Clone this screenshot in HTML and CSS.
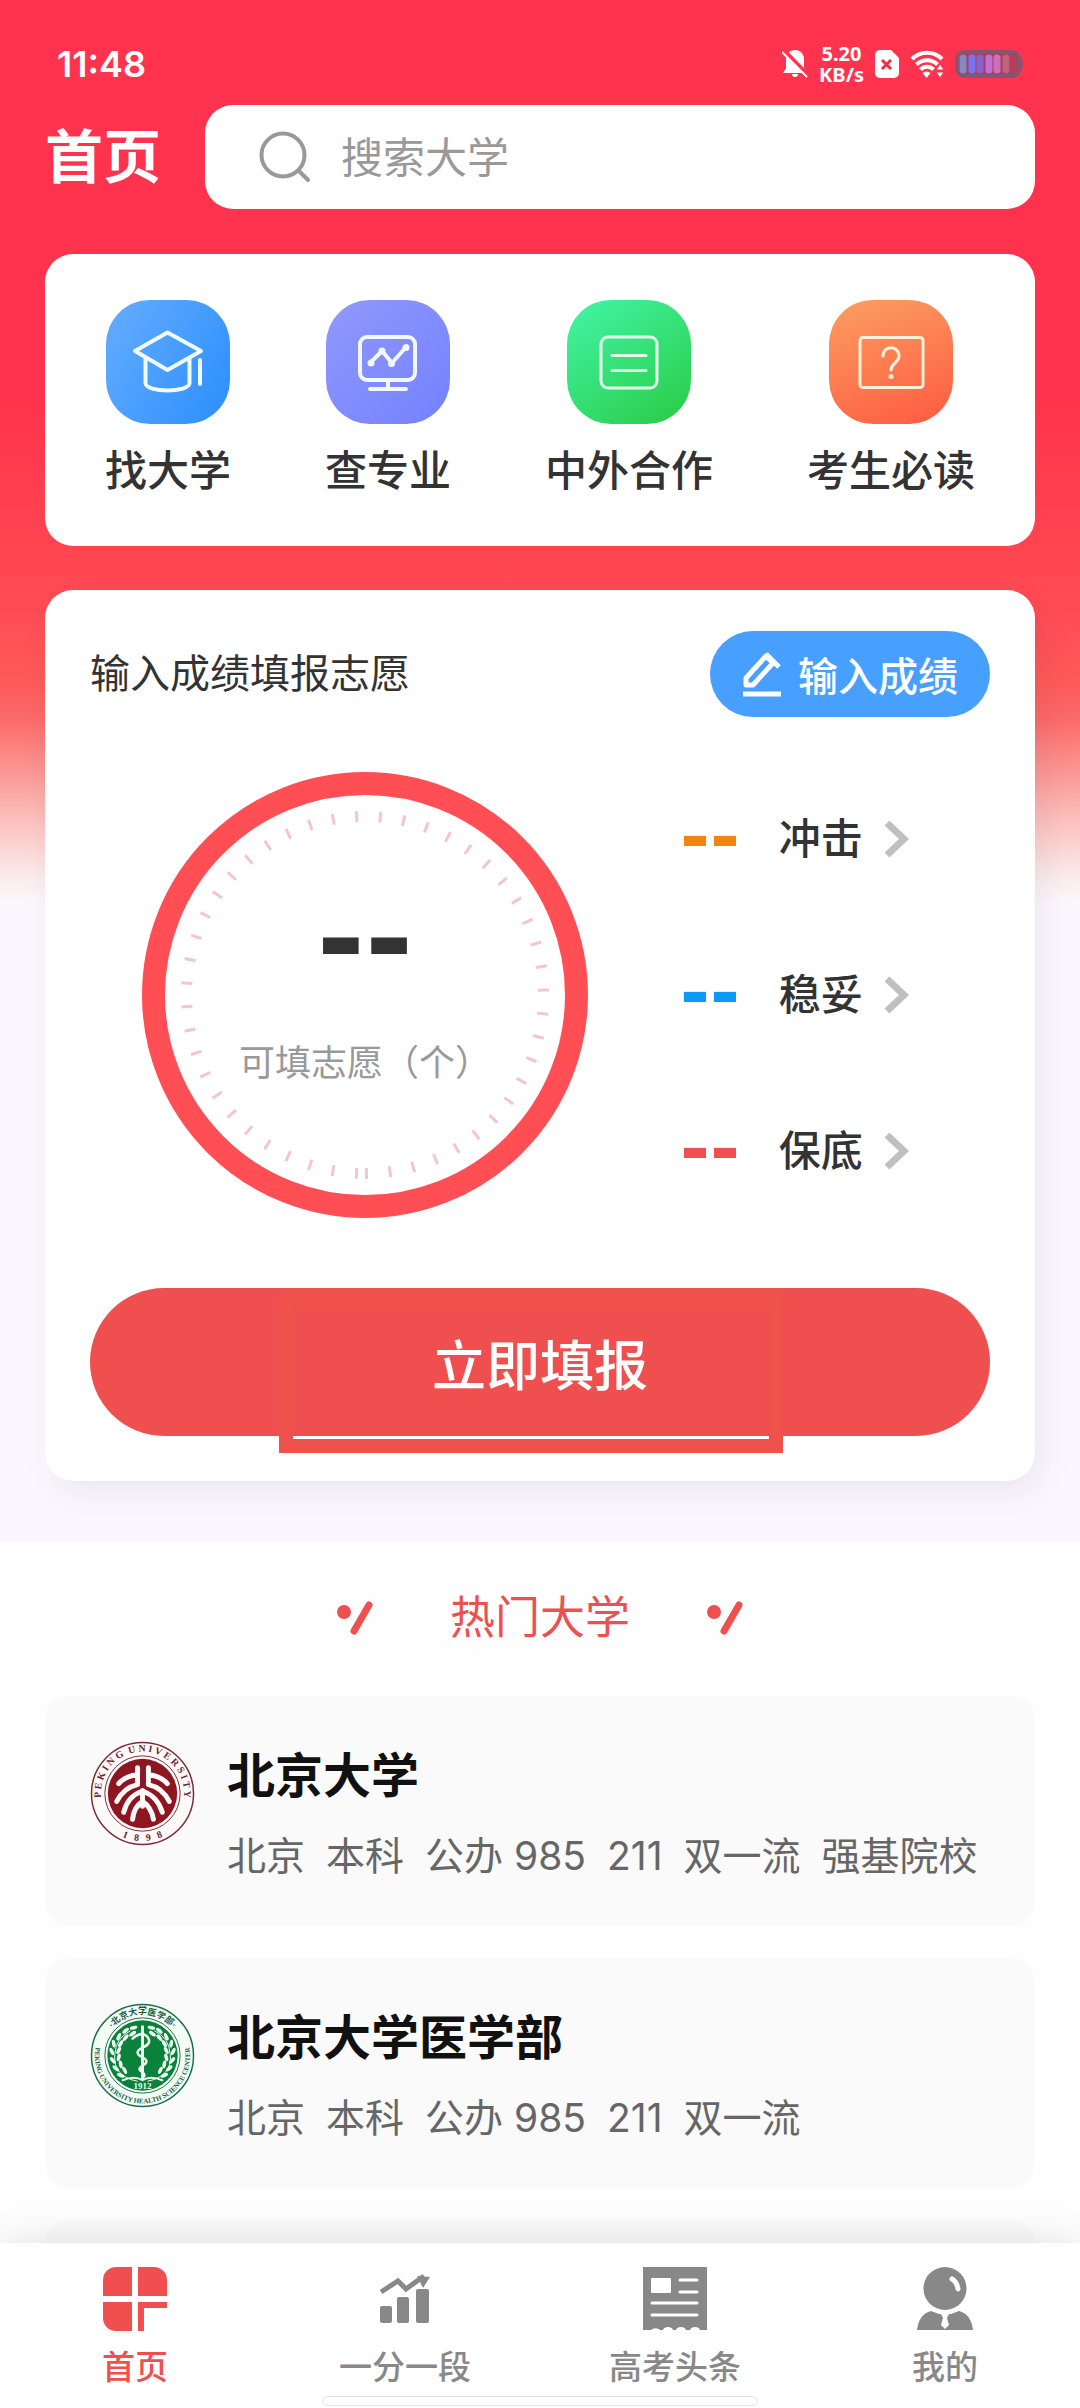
FILE: index.html
```html
<!DOCTYPE html>
<html lang="zh-CN">
<head>
<meta charset="utf-8">
<meta name="viewport" content="width=device-width, initial-scale=1">
<title>首页</title>
<link rel="stylesheet" href="styles.css">
</head>
<body>
<div class="app">
  <main class="scroller">
    <div class="hero">
      <div class="status">
        <time class="clock">11:48</time>
        <div class="status-icons">
          <svg width="26" height="30" viewBox="0 0 26 30"><path fill="#fff" d="M13 1c5.500 0 9 4 9 9v9l3 5H1l3-5v-9c0-5 3.500-9 9-9zM10 25h6a3 3 0 0 1-6 0z"/><path stroke="#ff334d" stroke-width="5" d="M1 1l26 27"/><path stroke="#fff" stroke-width="2" d="M0 3l25 25"/></svg>
          <div class="speed"><span>5.20</span><span>KB/s</span></div>
          <svg width="24" height="28" viewBox="0 0 24 28"><path fill="#fff" d="M5 0h11l8 8v15a5 5 0 0 1-5 5H5a5 5 0 0 1-5-5V5a5 5 0 0 1 5-5z"/><path stroke="#e8304a" stroke-width="3" d="M7 10l9 9M16 10l-9 9"/></svg>
          <svg width="34" height="28" viewBox="0 0 34 28" fill="none"><g stroke="#fff" stroke-width="4"><path d="M2 9a21 21 0 0 1 30 0"/><path d="M6.500 14.500a15 15 0 0 1 21 0"/><path d="M10.500 19.500a9 9 0 0 1 13 0"/></g><path fill="#fff" d="M12.500 23q4-3 8 0l-4 5z"/><path fill="#fff" stroke="#ff334d" stroke-width="1" d="M30 14l4 6h-8zM30 28l4-6h-8z"/></svg>
          <svg width="68" height="28" viewBox="0 0 68 28"><rect x="2" y="2" width="62" height="24" rx="7" fill="#a2425f" stroke="#855574" stroke-width="4"/><path stroke="#855574" stroke-width="3" stroke-linecap="round" d="M66 10v8"/><g stroke-width="7" stroke-linecap="round"><path stroke="#8787c5" d="M8 8v12"/><path stroke="#7a72ee" d="M17 8v12"/><path stroke="#8b62c8" d="M25 8v12"/><path stroke="#c070d0" d="M34 8v12"/><path stroke="#d070bd" d="M42 8v12"/><path stroke="#c0627e" d="M51 8v12"/><path stroke="#b44057" d="M58 8v12"/></g></svg>
        </div>
      </div>

      <header class="topbar">
        <h1 class="page-title">首页</h1>
        <label class="search">
          <svg width="52" height="52" viewBox="0 0 52 52" fill="none" stroke="#999" stroke-width="4" stroke-linecap="round"><circle cx="24" cy="24" r="21.500"/><path d="M40 40l9 9"/></svg>
          <input class="search-input" type="search" placeholder="搜索大学" aria-label="搜索大学">
        </label>
      </header>

      <nav class="card quick" aria-label="快捷入口">
        <a class="quick-item" href="#universities">
          <svg class="tile tile-blue" viewBox="0 0 124 124" fill="none" stroke="#f0fbff" stroke-width="4" stroke-linejoin="round" stroke-linecap="round"><path d="M61.500 32.500L95 51 61.500 70 29 51zM39.500 58v25c0 10 44 10 44 0V58M94 60v24"/></svg>
          <span>找大学</span>
        </a>
        <a class="quick-item" href="#majors">
          <svg class="tile tile-violet" viewBox="0 0 124 124" fill="none" stroke="#f2f8ff" stroke-width="4" stroke-linejoin="round" stroke-linecap="round"><rect x="34" y="37" width="55" height="43" rx="7"/><path d="M44 63l12-12 10 12 14-16M62 80v9M44 89h36"/><g fill="#f2f8ff" stroke="none"><circle cx="45" cy="63" r="3.500"/><circle cx="56" cy="51" r="3.500"/><circle cx="65.500" cy="63.500" r="3.500"/><circle cx="80" cy="47.500" r="3.500"/></g></svg>
          <span>查专业</span>
        </a>
        <a class="quick-item" href="#joint">
          <svg class="tile tile-green" viewBox="0 0 124 124" fill="none" stroke="#e2ffe9" stroke-width="3" stroke-linecap="round"><rect x="34" y="37" width="56" height="51" rx="7"/><path d="M45 55.500h34M45 70.500h34"/></svg>
          <span>中外合作</span>
        </a>
        <a class="quick-item" href="#guide">
          <svg class="tile tile-orange" viewBox="0 0 124 124" fill="none" stroke="#fff0d8" stroke-width="3" stroke-linecap="round"><rect x="31" y="37.500" width="63" height="50" rx="3"/><path d="M54 56c0-11 16-11 16 0 0 7-8 7-8 14"/><circle cx="62" cy="76.500" r="2.500" fill="#fff0d8" stroke="none"/></svg>
          <span>考生必读</span>
        </a>
      </nav>

      <section class="card plan">
        <div class="plan-head">
          <h2 class="plan-title">输入成绩填报志愿</h2>
          <button class="score-button" type="button">
            <svg width="40" height="46" viewBox="0 0 40 46" fill="none" stroke="#fff" stroke-width="5" stroke-linejoin="round"><path d="M4 34V27L24 5l7 7-20 22zM24 3l13 13" /><path d="M1 43h38"/></svg>
            <span>输入成绩</span>
          </button>
        </div>
        <div class="gauge-row">
          <div class="gauge">
            <svg class="gauge-ring" viewBox="0 0 446 446" fill="none"><circle cx="223" cy="223" r="211.500" stroke="#ff4f55" stroke-width="23"/><path stroke="#f1c6ce" stroke-width="11" stroke-dasharray="3 20.640" d="M223 401.500a178.500 178.500 0 0 0 0-357a178.500 178.500 0 0 0 0 357"/></svg>
            <div class="gauge-text">
              <strong class="gauge-value">--</strong>
              <span class="gauge-caption">可填志愿（个）</span>
            </div>
          </div>
          <div class="levels">
            <a class="level" href="#reach"><b class="level-value reach">--</b><span>冲击</span><svg class="chevron" viewBox="0 0 26 40"><path d="M4 4l17 16L4 36"/></svg></a>
            <a class="level" href="#match"><b class="level-value match">--</b><span>稳妥</span><svg class="chevron" viewBox="0 0 26 40"><path d="M4 4l17 16L4 36"/></svg></a>
            <a class="level" href="#safe"><b class="level-value safe">--</b><span>保底</span><svg class="chevron" viewBox="0 0 26 40"><path d="M4 4l17 16L4 36"/></svg></a>
          </div>
        </div>
        <div class="submit-wrap">
          <button class="submit" type="button">立即填报</button>
          <div class="focus-frame"></div>
        </div>
      </section>
    </div>

    <section class="popular" id="universities">
      <div class="popular-head">
        <svg class="spark" viewBox="0 0 38 36"><circle cx="8" cy="12" r="7"/><path d="M33 5L18 31"/></svg>
        <h2 class="popular-title">热门大学</h2>
        <svg class="spark" viewBox="0 0 38 36"><circle cx="8" cy="12" r="7"/><path d="M33 5L18 31"/></svg>
      </div>
      <div class="school-list">
        <a class="school" href="#pku">
          <svg class="seal" viewBox="-53 -53 106 106">
            <defs>
              <path id="pku-top" d="M-38 17.500A42 42 0 1 1 38 17.500"/>
              <path id="pku-bottom" d="M-46 15A48.500 48.500 0 0 0 46 15"/>
            </defs>
            <circle r="51.500" fill="#fffafa" stroke="#7c2a38" stroke-width="1.500"/>
            <circle r="38" fill="none" stroke="#7c2a38" stroke-width="1"/>
            <circle r="35" fill="#8e1620"/>
            <text class="seal-text maroon"><textPath href="#pku-top" startOffset="50%">P E K I N G &#160;U N I V E R S I T Y</textPath></text>
            <text class="seal-text maroon"><textPath href="#pku-bottom" startOffset="50%">1 &#160;&#160;8 &#160;&#160;9 &#160;&#160;8</textPath></text>
            <g fill="none" stroke="#fffafa" stroke-width="5" stroke-linecap="round">
              <path d="M-5-26v17M-5-19q-12 1-19 9M-5-9q-14 3-21 17M-1-2q-14 5-18 21M0 8q-9 6-10 18M0-3v16"/>
              <path d="M6-26v17M6-19q12 1 19 9M6-9q14 3 21 17M1-2q14 5 19 21M0 8q9 6 11 18"/>
            </g>
          </svg>
          <div class="school-info">
            <h3 class="school-name">北京大学</h3>
            <p class="tags"><span>北京</span><span>本科</span><span>公办 985</span><span>211</span><span>双一流</span><span>强基院校</span></p>
          </div>
        </a>
        <a class="school" href="#pkuhsc">
          <svg class="seal" viewBox="-53 -53 106 106">
            <defs>
              <path id="med-top" d="M-38-15A40.500 40.500 0 0 1 38-15"/>
              <path id="med-bottom" d="M-38-29A48 48 0 1 0 38-29"/>
              <g id="laurel" fill="#effbf1">
                <path d="M-5 26q-25-5-23-27 1-17 16-24" fill="none" stroke="#effbf1" stroke-width="1"/>
                <ellipse rx="4" ry="1.800" transform="translate(-9 -28) rotate(-15)"/><ellipse rx="4" ry="1.800" transform="translate(-10 -22) rotate(-35)"/>
                <ellipse rx="4" ry="1.800" transform="translate(-17 -25) rotate(-40)"/><ellipse rx="4" ry="1.800" transform="translate(-17 -18) rotate(-50)"/>
                <ellipse rx="4" ry="1.800" transform="translate(-24 -19) rotate(-65)"/><ellipse rx="4" ry="1.800" transform="translate(-22 -12) rotate(-60)"/>
                <ellipse rx="4" ry="1.800" transform="translate(-29 -12) rotate(80)"/><ellipse rx="4" ry="1.800" transform="translate(-24 -5) rotate(-65)"/>
                <ellipse rx="4" ry="1.800" transform="translate(-31 -4) rotate(65)"/><ellipse rx="4" ry="1.800" transform="translate(-24 2) rotate(-75)"/>
                <ellipse rx="4" ry="1.800" transform="translate(-30 5) rotate(50)"/><ellipse rx="4" ry="1.800" transform="translate(-22 9) rotate(80)"/>
                <ellipse rx="4" ry="1.800" transform="translate(-27 13) rotate(40)"/><ellipse rx="4" ry="1.800" transform="translate(-18 15) rotate(65)"/>
                <ellipse rx="4" ry="1.800" transform="translate(-22 20) rotate(25)"/>
              </g>
            </defs>
            <circle r="51.500" fill="#f3fcf5" stroke="#1c6e4a" stroke-width="1.500"/>
            <circle r="38" fill="none" stroke="#1c6e4a" stroke-width="1"/>
            <circle r="35.500" fill="#0b823c"/>
            <text class="seal-text seal-cn"><textPath href="#med-top" startOffset="50%">·北京大学医学部·</textPath></text>
            <text class="seal-text seal-small"><textPath href="#med-bottom" startOffset="50%">PEKING UNIVERSITY HEALTH SCIENCE CENTER</textPath></text>
            <use href="#laurel"/><use href="#laurel" transform="scale(-1 1)"/>
            <g fill="none" stroke="#effbf1" stroke-linecap="round">
              <path stroke-width="3" d="M0-29v52"/>
              <path stroke-width="2.500" d="M-10-17q9-8 15-2 5 7-5 11-10 5 0 10 8 4 0 8-6 4 0 7 4 3 0 6"/>
              <path stroke-width="2" d="M-20 25q12-5 20 0 8-5 20 0"/>
            </g>
            <text class="seal-year" y="34">1912</text>
          </svg>
          <div class="school-info">
            <h3 class="school-name">北京大学医学部</h3>
            <p class="tags"><span>北京</span><span>本科</span><span>公办 985</span><span>211</span><span>双一流</span></p>
          </div>
        </a>
        <div class="school" aria-hidden="true"></div>
      </div>
    </section>
  </main>

  <nav class="tabbar" aria-label="主导航">
    <a class="tab active" href="#home">
      <svg class="tab-icon" viewBox="0 0 64 64" fill="currentColor"><path d="M13 0h16v29H0V13A13 13 0 0 1 13 0zM35 0h16a13 13 0 0 1 13 13v16H35zM0 35h29v29H13A13 13 0 0 1 0 51zM35 35h29v6H41v23h-6z"/></svg>
      <span>首页</span>
    </a>
    <a class="tab" href="#rank">
      <svg class="tab-icon" viewBox="0 0 64 64" fill="currentColor"><rect x="7" y="39" width="12" height="17" rx="2"/><rect x="24" y="30" width="12" height="26" rx="2"/><rect x="43" y="22" width="13" height="34" rx="2"/><path fill="none" stroke="currentColor" stroke-width="5" d="M8 25l17-11 8 8 18-13"/><path d="M44 9l13 1-7 11z"/></svg>
      <span>一分一段</span>
    </a>
    <a class="tab" href="#news">
      <svg class="tab-icon" viewBox="0 0 64 64"><path fill="currentColor" d="M0 0h64v63h-7a5 3 0 0 0-10 0h-4a5 3 0 0 0-10 0h-3a5 3 0 0 0-10 0h-3a5 3 0 0 0-9 0H0z"/><rect x="8" y="11" width="20" height="15" rx="1" fill="#fff"/><path stroke="#fff" stroke-width="3" stroke-linecap="round" d="M37 13h17M37 25h17M9 36h45M9 48h45"/></svg>
      <span>高考头条</span>
    </a>
    <a class="tab" href="#me">
      <svg class="tab-icon" viewBox="0 0 64 64"><circle cx="32" cy="21.500" r="21.500" fill="currentColor"/><path fill="none" stroke="#fff" stroke-width="5" stroke-linecap="round" d="M39 12q5 3 6 10"/><path fill="currentColor" d="M4 63q2-16 14-19 14 7 28 0 12 3 14 19z"/><path fill="#fff" d="M28 47h8l-2 4 2 7-4 4-4-4 2-7z"/></svg>
      <span>我的</span>
    </a>
    <div class="home-indicator"></div>
  </nav>
</div>
</body>
</html>
```
FILE: styles.css
```css
* {
  box-sizing: border-box;
  margin: 0;
  padding: 0;
}

body {
  font-family: Inter, "Noto Sans CJK SC", sans-serif;
  color: #333;
  background: #fefefe;
}

a {
  color: inherit;
  text-decoration: none;
}

button {
  border: 0;
  font: inherit;
  cursor: pointer;
}

svg {
  display: block;
  flex: none;
}

.app {
  display: flex;
  flex-direction: column;
  height: 100vh;
}

.scroller {
  flex: 1;
  min-height: 0;
  overflow: hidden;
}

/* Red header that fades into a pale lavender */
.hero {
  padding: 0 45px 61px;
  background: linear-gradient(#ff334d 0, #ff334d 400px, #ff4450 540px, #ff4c54 610px, #fd5a58 680px, #fb6b69 720px, #fb9a96 775px, #fcc8c4 830px, #faeeee 880px, #fcf7ff 905px, #fcf7ff 100%);
}

.status {
  display: flex;
  justify-content: space-between;
  align-items: center;
  height: 105px;
  padding: 22px 12px 0;
  color: #fff;
}

.clock {
  font-size: 36px;
  font-weight: 600;
}

.status-icons {
  display: flex;
  align-items: center;
  gap: 11px;
}

.speed {
  display: flex;
  flex-direction: column;
  align-items: center;
  font: 700 20px/21px "Noto Sans", sans-serif;
}

.topbar {
  display: flex;
  align-items: center;
  gap: 44px;
  margin-bottom: 45px;
}

.page-title {
  flex: none;
  font-size: 58px;
  font-weight: 700;
  line-height: 60px;
  white-space: nowrap;
  color: #fff;
}

.search {
  display: flex;
  flex: 1;
  align-items: center;
  gap: 30px;
  min-width: 0;
  height: 104px;
  padding: 0 54px;
  border-radius: 28px;
  background: #fff;
}

.search-input {
  flex: 1;
  width: 100%;
  min-width: 0;
  border: 0;
  outline: 0;
  background: none;
  font: inherit;
  font-size: 42px;
  color: #333;
}

.search-input::placeholder {
  color: #999;
}

.card {
  border-radius: 28px;
  background: #fff;
}

.quick {
  display: flex;
  justify-content: space-between;
  margin-bottom: 44px;
  padding: 46px 60px 45px;
}

.quick-item {
  display: flex;
  flex-direction: column;
  align-items: center;
  gap: 17px;
  font-size: 42px;
  font-weight: 500;
  line-height: 60px;
}

.tile {
  width: 124px;
  height: 124px;
  border-radius: 44px;
}

.tile-blue {
  background: linear-gradient(120deg, #65adff, #2b8efd);
}

.tile-violet {
  background: linear-gradient(135deg, #9199fc, #7381fe);
}

.tile-green {
  background: linear-gradient(145deg, #42f5a8, #29cb44);
}

.tile-orange {
  background: linear-gradient(160deg, #fb9f62, #ff5a40);
}

.plan {
  padding: 41px 45px 45px;
  box-shadow: 8px 14px 32px rgba(60, 30, 70, 0.07);
}

.plan-head {
  display: flex;
  justify-content: space-between;
  align-items: center;
  margin-bottom: 55px;
}

.plan-title {
  font-size: 40px;
  font-weight: 400;
  line-height: 60px;
}

.score-button {
  display: flex;
  align-items: center;
  gap: 16px;
  height: 86px;
  padding: 0 32px;
  border-radius: 43px;
  background: #479fff;
  font-size: 40px;
  font-weight: 500;
  color: #fff;
}

.gauge-row {
  display: flex;
  align-items: center;
  gap: 92px;
  margin-bottom: 70px;
  padding-left: 52px;
}

.gauge {
  display: grid;
}

.gauge-ring,
.gauge-text {
  grid-area: 1 / 1;
}

.gauge-ring {
  width: 446px;
  height: 446px;
}

.gauge-text {
  display: flex;
  flex-direction: column;
  justify-content: center;
  align-items: center;
  gap: 8px;
  padding-top: 12px;
  line-height: 116px;
}

.gauge-value {
  font-family: "DejaVu Sans", sans-serif;
  font-size: 116px;
}

.gauge-caption {
  font-size: 36px;
  color: #999;
}

.levels {
  display: flex;
  flex-direction: column;
  gap: 96px;
}

.level {
  display: flex;
  align-items: center;
  font-size: 42px;
  font-weight: 500;
  line-height: 60px;
}

.level-value {
  margin-right: 39px;
  padding-bottom: 6px;
  font-family: "DejaVu Sans", sans-serif;
  font-size: 72px;
  line-height: 54px;
}

.reach {
  color: #f0860f;
}

.match {
  color: #0b9bf5;
}

.safe {
  color: #ef504f;
}

.chevron {
  width: 26px;
  height: 40px;
  margin-left: 20px;
  fill: none;
  stroke: #bfbfbf;
  stroke-width: 7;
}

.submit-wrap {
  position: relative;
}

.submit {
  width: 100%;
  height: 148px;
  border-radius: 74px;
  background: #ef504f;
  font-size: 54px;
  font-weight: 500;
  color: #fff;
}

/* Square frame drawn over the middle of the button */
.focus-frame {
  position: absolute;
  top: 5px;
  bottom: -17px;
  left: 21%;
  width: 56%;
  border: 14px solid #ee524b;
  pointer-events: none;
}

.popular {
  padding: 46px 45px 0;
}

.popular-head {
  display: flex;
  justify-content: center;
  align-items: center;
  gap: 76px;
  margin-bottom: 48px;
}

.popular-title {
  font-size: 45px;
  font-weight: 400;
  line-height: 60px;
  color: #e95251;
}

.spark {
  width: 38px;
  height: 36px;
  fill: #ef504f;
  stroke: #ef504f;
  stroke-linecap: round;
}

.spark circle {
  stroke: none;
}

.spark path {
  stroke-width: 7;
}

.school-list {
  display: flex;
  flex-direction: column;
  gap: 32px;
}

.school {
  display: flex;
  align-items: flex-start;
  gap: 32px;
  min-height: 230px;
  padding: 45px 45px 40px;
  border-radius: 24px;
  background: #fafafa;
}

.seal {
  width: 105px;
  height: 105px;
}

.seal-text {
  font: 700 9px "Liberation Serif", "Noto Sans CJK SC", serif;
  text-anchor: middle;
  fill: #1c5e42;
}

.maroon {
  font-size: 10px;
  fill: #6b2431;
}

.seal-cn {
  font-size: 9px;
}

.seal-small {
  font-size: 7px;
}

.seal-year {
  font: 700 9px "Liberation Serif", serif;
  text-anchor: middle;
  fill: #effbf1;
}

.school-info {
  display: flex;
  flex-direction: column;
  gap: 20px;
  padding-top: 5px;
  line-height: 60px;
}

.school-name {
  font-size: 48px;
  font-weight: 700;
  color: #111;
}

.tags {
  display: flex;
  gap: 21px;
  font-size: 39px;
  color: #666;
  white-space: nowrap;
}

.tabbar {
  position: relative;
  display: grid;
  grid-template-columns: repeat(4, 1fr);
  padding: 24px 0 18px;
  background: #fff;
  box-shadow: 0 0 40px rgba(0, 0, 0, 0.12);
  color: #888;
}

.tab {
  display: flex;
  flex-direction: column;
  align-items: center;
  gap: 13px;
  font-size: 33px;
  font-weight: 500;
  line-height: 46px;
}

.tab-icon {
  width: 64px;
  height: 64px;
}

.active {
  color: #ef504f;
}

.home-indicator {
  position: absolute;
  bottom: 2px;
  left: 50%;
  width: 436px;
  height: 10px;
  margin-left: -218px;
  border: 1px solid #e4e4e4;
  border-radius: 5px;
  background: #fff;
}
```
